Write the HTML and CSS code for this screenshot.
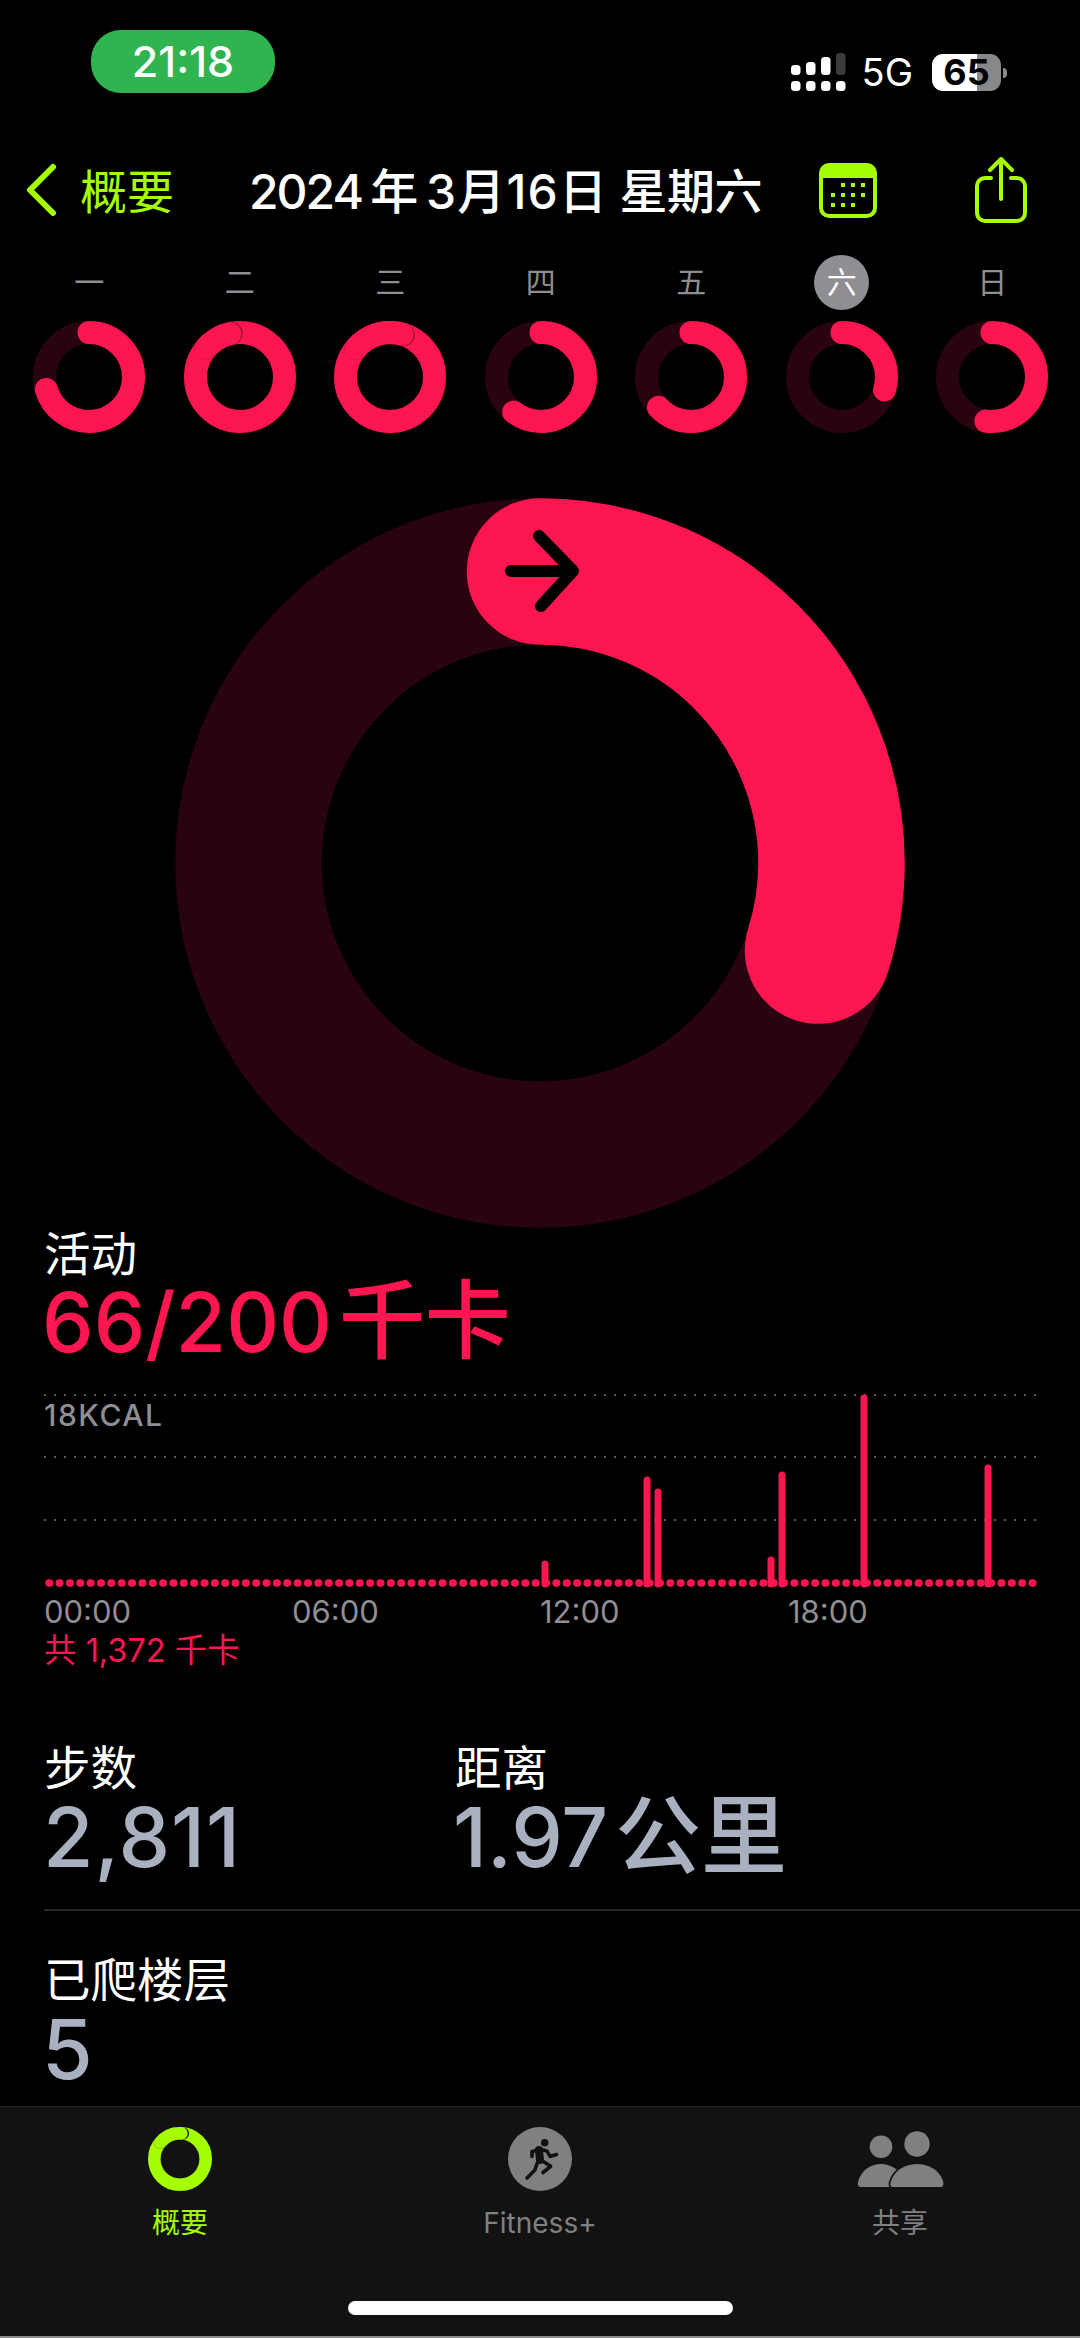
FILE: index.html
```html
<!DOCTYPE html>
<html lang="zh-CN">
<head>
  <meta charset="UTF-8" />
  <meta name="viewport" content="width=device-width, initial-scale=1.0" />
  <title>活动 - 概要</title>
  <link rel="stylesheet" href="styles.css">
</head>
<body>

  <div class="status-bar">
    <div class="time-pill">21:18</div>
    <div class="status-right">
      <svg class="signal" width="55" height="38" viewBox="0 0 55 38">
        <rect x="0" y="28" width="9.5" height="10" rx="3.5" fill="#fff"/>
        <rect x="15" y="28" width="9.5" height="10" rx="3.5" fill="#fff"/>
        <rect x="30" y="28" width="9.5" height="10" rx="3.5" fill="#fff"/>
        <rect x="45" y="28" width="9.5" height="10" rx="3.5" fill="#fff"/>
        <rect x="0" y="12" width="9.5" height="10" rx="3.5" fill="#fff"/>
        <rect x="15" y="9" width="9.5" height="13" rx="3.5" fill="#fff"/>
        <rect x="30" y="4" width="9.5" height="18" rx="3.5" fill="#fff"/>
        <rect x="45" y="0" width="9.5" height="22" rx="3.5" fill="#3c3c3c"/>
      </svg>
      <span class="network">5G</span>
      <div class="battery">65</div>
    </div>
  </div>

  <div class="nav-bar">
    <svg class="back-icon" width="32" height="54" viewBox="0 0 32 54">
      <path d="M28 4 L5 27 L28 50" fill="none" stroke="#a6ff00" stroke-width="6" stroke-linecap="round" stroke-linejoin="round"/>
    </svg>
    <a class="back-link">概要</a>
    <h1 class="nav-title"><span class="title-year">2024</span> 年 <span class="title-date">3月16日</span> <span class="title-day">星期六</span></h1>
    <svg class="calendar-icon" width="58" height="55" viewBox="0 0 58 55">
      <rect x="2" y="2" width="54" height="51" rx="8" fill="none" stroke="#a6ff00" stroke-width="4"/>
      <path d="M2 15 V10 a8 8 0 0 1 8 -8 H48 a8 8 0 0 1 8 8 V15 Z" fill="#a6ff00"/>
      <g fill="#a6ff00">
        <rect x="22" y="20" width="4" height="4"/><rect x="32" y="20" width="4" height="4"/><rect x="42" y="20" width="4" height="4"/>
        <rect x="12" y="30" width="4" height="4"/><rect x="22" y="30" width="4" height="4"/><rect x="32" y="30" width="4" height="4"/><rect x="42" y="30" width="4" height="4"/>
        <rect x="12" y="40" width="4" height="4"/><rect x="22" y="40" width="4" height="4"/><rect x="32" y="40" width="4" height="4"/>
      </g>
    </svg>
    <svg class="share-icon" width="52" height="66" viewBox="0 0 52 66">
      <path d="M16 21 H10 a8 8 0 0 0 -8 8 V56 a8 8 0 0 0 8 8 H42 a8 8 0 0 0 8 -8 V29 a8 8 0 0 0 -8 -8 H36" fill="none" stroke="#a6ff00" stroke-width="4" stroke-linecap="round"/>
      <path d="M26 42 V3 M15 13 L26 2 L37 13" fill="none" stroke="#a6ff00" stroke-width="4" stroke-linecap="round" stroke-linejoin="round"/>
    </svg>
  </div>

  <div class="week">
    <div class="day">
      <span class="day-label">一</span>
      <svg class="day-ring" width="112" height="112" viewBox="0 0 112 112">
        <circle class="ring-track" cx="56" cy="56" r="44.5"/>
        <circle class="ring-fill" cx="56" cy="56" r="44.5" pathLength="360" stroke-dasharray="253.5 1000" transform="rotate(-90 56 56)"/>
      </svg>
    </div>
    <div class="day">
      <span class="day-label">二</span>
      <svg class="day-ring" width="112" height="112" viewBox="0 0 112 112">
        <circle class="ring-fill" cx="56" cy="56" r="44.5"/>
        <circle class="ring-seam" cx="56" cy="56" r="44.5" pathLength="360" stroke-dasharray="38.5 1000" transform="rotate(-140 56 56)"/>
        <circle class="ring-fill" cx="56" cy="56" r="44.5" pathLength="360" stroke-dasharray="37 1000" transform="rotate(-140 56 56)"/>
      </svg>
    </div>
    <div class="day">
      <span class="day-label">三</span>
      <svg class="day-ring" width="112" height="112" viewBox="0 0 112 112">
        <circle class="ring-fill" cx="56" cy="56" r="44.5"/>
        <circle class="ring-seam" cx="56" cy="56" r="44.5" pathLength="360" stroke-dasharray="67.5 1000" transform="rotate(-140 56 56)"/>
        <circle class="ring-fill" cx="56" cy="56" r="44.5" pathLength="360" stroke-dasharray="66 1000" transform="rotate(-140 56 56)"/>
      </svg>
    </div>
    <div class="day">
      <span class="day-label">四</span>
      <svg class="day-ring" width="112" height="112" viewBox="0 0 112 112">
        <circle class="ring-track" cx="56" cy="56" r="44.5"/>
        <circle class="ring-fill" cx="56" cy="56" r="44.5" pathLength="360" stroke-dasharray="218 1000" transform="rotate(-90 56 56)"/>
      </svg>
    </div>
    <div class="day">
      <span class="day-label">五</span>
      <svg class="day-ring" width="112" height="112" viewBox="0 0 112 112">
        <circle class="ring-track" cx="56" cy="56" r="44.5"/>
        <circle class="ring-fill" cx="56" cy="56" r="44.5" pathLength="360" stroke-dasharray="227 1000" transform="rotate(-90 56 56)"/>
      </svg>
    </div>
    <div class="day">
      <span class="day-label day-selected">六</span>
      <svg class="day-ring" width="112" height="112" viewBox="0 0 112 112">
        <circle class="ring-track" cx="56" cy="56" r="44.5"/>
        <circle class="ring-fill" cx="56" cy="56" r="44.5" pathLength="360" stroke-dasharray="107 1000" transform="rotate(-90 56 56)"/>
      </svg>
    </div>
    <div class="day">
      <span class="day-label">日</span>
      <svg class="day-ring" width="112" height="112" viewBox="0 0 112 112">
        <circle class="ring-track" cx="56" cy="56" r="44.5"/>
        <circle class="ring-fill" cx="56" cy="56" r="44.5" pathLength="360" stroke-dasharray="188 1000" transform="rotate(-90 56 56)"/>
      </svg>
    </div>
  </div>

  <div class="hero">
    <svg width="732" height="732" viewBox="0 0 732 732">
      <circle class="big-track" cx="366" cy="366" r="291.5"/>
      <circle class="big-fill" cx="366" cy="366" r="291.5" pathLength="360" stroke-dasharray="107.5 1000" transform="rotate(-90 366 366)"/>
      <path d="M337 74 H398 M365 39 L399 74 L367 109" fill="none" stroke="#000" stroke-width="12" stroke-linecap="round" stroke-linejoin="round"/>
    </svg>
  </div>

  <section class="activity">
    <div class="stat-label">活动</div>
    <div class="stat-value move">66/200 <span class="unit">千卡</span></div>

    <div class="chart">
      <span class="chart-label">18KCAL</span>
      <svg width="1000" height="200" viewBox="0 0 1000 200">
        <g class="grid-lines">
          <line x1="0" y1="6" x2="992" y2="6"/>
          <line x1="0" y1="68" x2="992" y2="68"/>
          <line x1="0" y1="131" x2="992" y2="131"/>
        </g>
        <line class="chart-dots" x1="5" y1="194" x2="990" y2="194"/>
        <g class="chart-bars">
          <line x1="501" y1="175" x2="501" y2="195"/>
          <line x1="603" y1="91" x2="603" y2="195"/>
          <line x1="614" y1="103" x2="614" y2="195"/>
          <line x1="727" y1="171" x2="727" y2="195"/>
          <line x1="738" y1="86" x2="738" y2="195"/>
          <line x1="820" y1="9" x2="820" y2="195"/>
          <line x1="944" y1="79" x2="944" y2="195"/>
        </g>
      </svg>
    </div>

    <div class="chart-axis">
      <span>00:00</span>
      <span>06:00</span>
      <span>12:00</span>
      <span>18:00</span>
    </div>
    <div class="chart-total">共 1,372 千卡</div>
  </section>

  <section class="stats">
    <div class="stats-row">
      <div>
        <div class="stat-label">步数</div>
        <div class="stat-value steps">2,811</div>
      </div>
      <div>
        <div class="stat-label">距离</div>
        <div class="stat-value">1.97 <span class="unit">公里</span></div>
      </div>
    </div>
    <div class="stats-row stats-row-last">
      <div>
        <div class="stat-label">已爬楼层</div>
        <div class="stat-value">5</div>
      </div>
    </div>
  </section>

  <div class="tab-bar">
    <div class="tabs">
      <div class="tab tab-active">
        <svg width="66" height="64" viewBox="0 0 66 64">
          <circle class="tab-ring" cx="33" cy="32" r="25.7"/>
          <circle class="tab-ring-seam" cx="33" cy="32" r="25.7" pathLength="360" stroke-dasharray="56 1000" transform="rotate(-140 33 32)"/>
          <circle class="tab-ring" cx="33" cy="32" r="25.7" pathLength="360" stroke-dasharray="53 1000" transform="rotate(-140 33 32)"/>
        </svg>
        <span>概要</span>
      </div>
      <div class="tab">
        <svg width="64" height="64" viewBox="0 0 64 64">
          <circle cx="32" cy="32" r="32" fill="#808080"/>
          <circle cx="36.7" cy="15.7" r="3.8" fill="#111"/>
          <g fill="none" stroke="#111" stroke-width="3.6" stroke-linecap="round" stroke-linejoin="round">
            <path d="M24 29.5 V24.5 L33 22.5 L39 24 L42 29.5 L48.5 27.5"/>
            <path d="M33 33 L42.7 39.3 L35 45.5"/>
            <path d="M30 34 L26.7 43.3 L19 51"/>
            <path d="M31 23 L32 33" stroke-width="8"/>
          </g>
        </svg>
        <span>Fitness+</span>
      </div>
      <div class="tab">
        <svg width="88" height="64" viewBox="0 0 88 64">
          <g transform="translate(-15 -12)">
            <circle cx="40" cy="31.7" r="11.3" fill="#808080"/>
            <circle cx="76" cy="29" r="12.7" fill="#808080"/>
            <path d="M20 72 Q16 72 17 67 C20 55 30 49 40 49 C50 49 60 55 63 67 C64 70 62 72 60 72 Z" fill="#808080"/>
            <path d="M52 72 Q48 72 50 66 C54 54 66 49 76 49 C86 49 98 54 102 66 C103 70 102 72 99 72 Z" fill="#808080" stroke="#121212" stroke-width="3.5" paint-order="stroke"/>
          </g>
        </svg>
        <span>共享</span>
      </div>
    </div>
    <div class="home-indicator"></div>
  </div>

</body>
</html>
```

FILE: styles.css
```css
body {
  margin: 0;
  width: 1080px;
  height: 2338px;
  display: flex;
  flex-direction: column;
  overflow: hidden;
  font-family: Inter, 'Noto Sans CJK SC', sans-serif;
  background-color: #000;
  color: #fff;
}

svg {
  display: block;
}

/* status bar */

.status-bar {
  display: flex;
  justify-content: space-between;
  align-items: flex-start;
  padding: 30px 73px 0 91px;
}

.time-pill {
  width: 184px;
  height: 63px;
  line-height: 63px;
  border-radius: 30px;
  background: #30b44f;
  text-align: center;
  font-size: 43px;
  font-weight: 500;
}

.status-right {
  display: flex;
  align-items: center;
  gap: 16px;
  margin-top: 23px;
  margin-right: 6px;
}

.network {
  margin-right: 3px;
  font-size: 38px;
  line-height: 38px;
}

.battery {
  position: relative;
  width: 69px;
  height: 37px;
  line-height: 37px;
  border-radius: 11px;
  background: linear-gradient(to right, #fff 65%, #888 65%);
  color: #000;
  text-align: center;
  font-size: 36px;
  font-weight: 700;
}

.battery::after {
  content: "";
  position: absolute;
  right: -6px;
  top: 14px;
  width: 4px;
  height: 10px;
  border-radius: 0 5px 5px 0;
  background: #888;
}

/* nav */

.nav-bar {
  display: flex;
  align-items: center;
  height: 66px;
  margin-top: 64px;
  padding-left: 25px;
}

.back-link {
  margin-left: 23px;
  margin-bottom: 4px;
  font-size: 47px;
  color: #a6ff00;
}

.nav-title {
  margin: 0 0 4px 75px;
  width: 570px;
  font-size: 48px;
  font-weight: 500;
  letter-spacing: -0.5px;
  word-spacing: -4px;
  white-space: nowrap;
}

.title-year {
  letter-spacing: -2px;
}

.title-date {
  letter-spacing: 1.2px;
}

.title-day {
  margin-left: 3px;
}

.share-icon {
  margin-left: 98px;
}

/* week */

.week {
  display: grid;
  grid-template-columns: repeat(7, 150.5px);
  margin-top: 32px;
  padding-left: 14px;
}

.day {
  display: flex;
  flex-direction: column;
  align-items: center;
  gap: 11px;
}

.day-label {
  width: 55px;
  height: 55px;
  line-height: 55px;
  text-align: center;
  font-size: 30px;
  color: #8e8e93;
}

.day-selected {
  border-radius: 50%;
  background: #8e8e93;
  color: #fff;
}

.day-ring circle {
  fill: none;
  stroke-width: 23;
}

.ring-track {
  stroke: #290310;
}

.ring-fill {
  stroke: #fe1650;
  stroke-linecap: round;
}

.ring-seam {
  stroke: #8a0f2e;
  stroke-linecap: round;
}

/* big ring */

.hero {
  display: flex;
  justify-content: center;
  margin-top: 64px;
}

.big-track,
.big-fill {
  fill: none;
  stroke-width: 146.5;
}

.big-track {
  stroke: #290310;
}

.big-fill {
  stroke: #fe1650;
  stroke-linecap: round;
}

/* activity */

.activity {
  padding-left: 44px;
}

.stat-label {
  font-size: 46.5px;
  line-height: 50px;
}

.stat-value {
  margin-top: 2px;
  margin-left: -2px;
  font-size: 82px;
  line-height: 84px;
  font-weight: 500;
  word-spacing: -15px;
  color: #a9b0bf;
  white-space: nowrap;
}

.stat-value .unit {
  font-size: 86px;
  line-height: 0;
}

.stat-value.move {
  color: #fe1650;
}

.stat-value.steps {
  margin-left: -1px;
  letter-spacing: 1px;
}

.chart {
  position: relative;
  margin-top: 24px;
}

.chart-label {
  position: absolute;
  left: 0;
  top: 9px;
  font-size: 30px;
  line-height: 34px;
  font-weight: 500;
  letter-spacing: 1.5px;
  color: #8e8e93;
}

.grid-lines line {
  stroke: #5a5a5a;
  stroke-width: 2;
  stroke-dasharray: 2 8;
}

.chart-dots {
  stroke: #fe1650;
  stroke-width: 7.5;
  stroke-linecap: round;
  stroke-dasharray: 0.5 9.85;
}

.chart-bars line {
  stroke: #fe1650;
  stroke-width: 7;
  stroke-linecap: round;
}

.chart-axis {
  display: grid;
  grid-template-columns: repeat(4, 248px);
  margin-top: 6px;
  font-size: 31px;
  line-height: 33px;
  color: #8e8e93;
}

.chart-total {
  margin-top: 4px;
  font-size: 32.5px;
  line-height: 38px;
  color: #fe1650;
}

/* stats */

.stats {
  margin-top: 73px;
  margin-left: 44px;
}

.stats .stat-value {
  margin-top: 3px;
}

.stats-row {
  display: grid;
  grid-template-columns: 411px 1fr;
  padding-bottom: 29px;
  border-bottom: 2px solid #262626;
}

.stats-row-last {
  padding-top: 44px;
  padding-bottom: 0;
  border-bottom: 0;
}

/* tab bar */

.tab-bar {
  margin-top: auto;
  height: 229px;
  background: #121212;
  border-top: 1px solid #262626;
  border-bottom: 2px solid #8a8a8a;
}

.tabs {
  display: grid;
  grid-template-columns: 360px 360px 360px;
  padding-top: 20px;
}

.tab {
  display: flex;
  flex-direction: column;
  align-items: center;
  gap: 17px;
  font-size: 28px;
  line-height: 30px;
  color: #808080;
}

.tab-active {
  color: #a6ff00;
}

.tab-ring,
.tab-ring-seam {
  fill: none;
  stroke-width: 12.6;
  stroke-linecap: round;
}

.tab-ring {
  stroke: #a6ff00;
}

.tab-ring-seam {
  stroke: #121212;
}

.home-indicator {
  width: 385px;
  height: 14px;
  margin: 63px auto 0;
  border-radius: 7px;
  background: #fff;
}
```
